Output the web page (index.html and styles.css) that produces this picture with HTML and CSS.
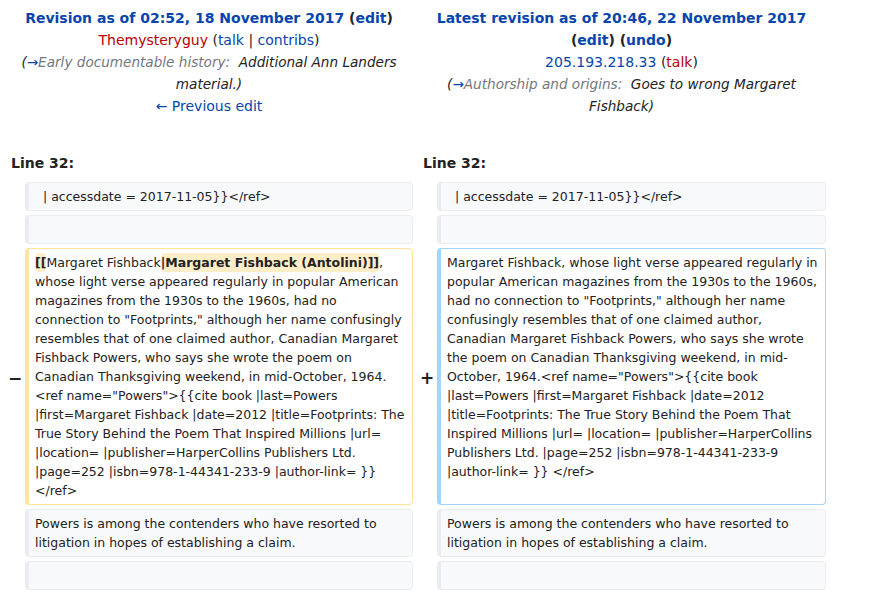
FILE: index.html
```html
<!DOCTYPE html>
<html>
<head>
<meta charset="utf-8">
<link rel="stylesheet" href="styles.css">
</head>
<body>
<div class="diff">
  <div class="hdr hdr-old">
    <div class="title"><a href="#">Revision as of 02:52, 18 November 2017</a> <span class="paren">(<a href="#">edit</a>)</span></div>
    <div><a class="new" href="#">Themysteryguy</a> (<a href="#">talk</a> | <a href="#">contribs</a>)</div>
    <div class="comment">(<span class="auto"><a href="#">→</a>Early documentable history:</span>&nbsp; Additional Ann Landers material.)</div>
    <div><a href="#">← Previous edit</a></div>
  </div>
  <div class="hdr hdr-new">
    <div class="title"><a href="#">Latest revision as of 20:46, 22 November 2017</a> <span class="paren">(<a href="#">edit</a>) (<a href="#">undo</a>)</span></div>
    <div><a href="#">205.193.218.33</a> (<a class="new" href="#">talk</a>)</div>
    <div class="comment">(<span class="auto"><a href="#">→</a>Authorship and origins:</span>&nbsp; Goes to wrong Margaret Fishback)</div>
  </div>

  <div class="lineno">Line 32:</div>
  <div class="lineno">Line 32:</div>

  <div class="marker"></div>
  <div class="cell context">  | accessdate = 2017-11-05}}&lt;/ref&gt;</div>
  <div class="marker"></div>
  <div class="cell context">  | accessdate = 2017-11-05}}&lt;/ref&gt;</div>

  <div class="marker"></div>
  <div class="cell context"><br></div>
  <div class="marker"></div>
  <div class="cell context"><br></div>

  <div class="marker">−</div>
  <div class="cell deleted"><del class="hl">[[</del>Margaret Fishback<del class="hl">|Margaret Fishback (Antolini)]]</del>, whose light verse appeared regularly in popular American magazines from the 1930s to the 1960s, had no connection to "Footprints," although her name confusingly resembles that of one claimed author, Canadian Margaret Fishback Powers, who says she wrote the poem on Canadian Thanksgiving weekend, in mid-October, 1964. &lt;ref name="Powers"&gt;{{cite book |last=Powers |first=Margaret Fishback |date=2012 |title=Footprints: The True Story Behind the Poem That Inspired Millions |url= |location= |publisher=HarperCollins Publishers Ltd. |page=252 |isbn=978-1-44341-233-9 |author-link= }} &lt;/ref&gt;</div>
  <div class="marker">+</div>
  <div class="cell added">Margaret Fishback, whose light verse appeared regularly in popular American magazines from the 1930s to the 1960s, had no connection to "Footprints," although her name confusingly resembles that of one claimed author, Canadian Margaret Fishback Powers, who says she wrote the poem on Canadian Thanksgiving weekend, in mid-October, 1964.&lt;ref name="Powers"&gt;{{cite book |last=Powers |first=Margaret Fishback |date=2012 |title=Footprints: The True Story Behind the Poem That Inspired Millions |url= |location= |publisher=HarperCollins Publishers Ltd. |page=252 |isbn=978-1-44341-233-9 |author-link= }} &lt;/ref&gt;</div>

  <div class="marker"></div>
  <div class="cell context">Powers is among the contenders who have resorted to litigation in hopes of establishing a claim.</div>
  <div class="marker"></div>
  <div class="cell context">Powers is among the contenders who have resorted to litigation in hopes of establishing a claim.</div>

  <div class="marker"></div>
  <div class="cell context"><br></div>
  <div class="marker"></div>
  <div class="cell context"><br></div>
</div>
</body>
</html>
```

FILE: styles.css
```css
html, body {
  margin: 0;
  padding: 0;
  background: #fff;
}
body {
  font-family: "DejaVu Sans", sans-serif;
  color: #222;
}
a {
  color: #0645ad;
  text-decoration: none;
}
a.new {
  color: #ba0000;
}
.diff {
  display: grid;
  grid-template-columns: 16px 388px 16px 389px;
  column-gap: 4px;
  row-gap: 4px;
  padding: 7px 0 0 5px;
}
.hdr {
  grid-column: span 2;
  text-align: center;
  font-size: 14px;
  line-height: 22px;
  padding: 0 6px;
}
.hdr .title {
  font-weight: bold;
}
.paren {
  color: #222;
}
.comment {
  font-style: italic;
  font-size: 13.6px;
  color: #222;
}
.comment .auto {
  color: #72777d;
}
.lineno {
  grid-column: span 2;
  font-weight: bold;
  font-size: 14px;
  line-height: 19px;
  padding: 33px 6px 5px;
}
.marker {
  display: flex;
  align-items: center;
  justify-content: center;
  padding-left: 4px;
  padding-top: 3px;
  font-weight: bold;
  font-size: 17px;
  color: #222;
}
.cell {
  font-size: 12.5px;
  line-height: 19px;
  white-space: pre-wrap;
  overflow-wrap: break-word;
  border: 1px solid #eaecf0;
  border-left-width: 4px;
  border-radius: 4px;
  padding: 4px 6px 4px 6px;
}
.context {
  background: #f8f9fa;
  color: #222;
}
.deleted {
  border-color: #ffe49c;
}
.added {
  border-color: #a3d3ff;
}
del.hl {
  text-decoration: none;
  font-weight: bold;
  background: #feeec8;
  border-radius: 4px;
  padding: 2px 0;
}
```
